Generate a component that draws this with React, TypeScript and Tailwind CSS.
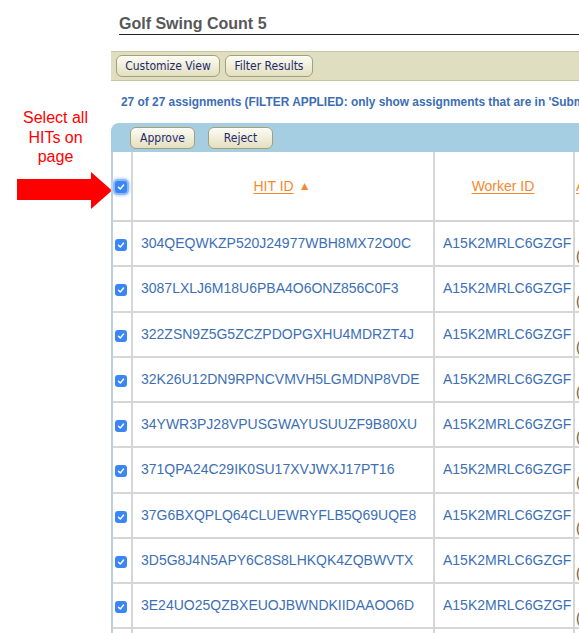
import React from 'react';

const hits = [
  '304QEQWKZP520J24977WBH8MX72O0C',
  '3087LXLJ6M18U6PBA4O6ONZ856C0F3',
  '322ZSN9Z5G5ZCZPDOPGXHU4MDRZT4J',
  '32K26U12DN9RPNCVMVH5LGMDNP8VDE',
  '34YWR3PJ28VPUSGWAYUSUUZF9B80XU',
  '371QPA24C29IK0SU17XVJWXJ17PT16',
  '37G6BXQPLQ64CLUEWRYFLB5Q69UQE8',
  '3D5G8J4N5APY6C8S8LHKQK4ZQBWVTX',
  '3E24UO25QZBXEUOJBWNDKIIDAAOO6D',
  '3F1567XTNW4KCXZ4ZU5HRSO8Q9KQ8I',
];

const Button: React.FC<{ label: string; className?: string }> = ({ label, className }) => (
  <button
    className={`h-[22px] rounded-[6px] border border-[#a59f76] bg-gradient-to-b from-[#fdfcf3] to-[#e3dfc0] font-['DejaVu_Sans_Condensed',sans-serif] text-[12px] text-[#1f2a6e] shadow-[inset_0_1px_0_#ffffff] ${className ?? ''}`}
  >
    {label}
  </button>
);

// macOS-style checked checkbox
const Check: React.FC<{ focused?: boolean }> = ({ focused }) => (
  <span
    className={`flex h-[12px] w-[12px] items-center justify-center rounded-[3px] bg-[#3a86f4] ${
      focused ? 'shadow-[0_0_0_2px_#8db9f6,0_0_3px_3px_#b9d4fa]' : ''
    }`}
  >
    <svg width="8" height="8" viewBox="0 0 8 8" fill="none">
      <path d="M1.5 4.2 L3.3 6 L6.6 2" stroke="#ffffff" strokeWidth="1.4" strokeLinecap="round" strokeLinejoin="round" />
    </svg>
  </span>
);

export default function App() {
  return (
    <div className="flex h-[633px] w-[579px] overflow-hidden bg-white font-['Liberation_Sans',Arial,sans-serif]">
      {/* Annotation */}
      <div className="w-[111px] shrink-0">
        <div className="mt-[108px] text-center text-[16px] leading-[19.5px] text-[#ff0000]">
          Select all
          <br />
          HITs on
          <br />
          page
        </div>
        <svg className="ml-[17px] mt-[5.5px] overflow-visible" width="95" height="37" viewBox="0 0 95 37">
          <rect x="0" y="7" width="75" height="21" fill="#ff0000" />
          <polygon points="74,0 95,18.5 74,37" fill="#ff0000" />
        </svg>
      </div>

      {/* Page content */}
      <div className="min-w-0 flex-1">
        <div className="ml-2 border-b-[1.5px] border-[#222] pt-[14px] text-[16px] font-bold leading-[20px] text-[#585858]">
          Golf Swing Count 5
        </div>

        <div className="mt-[16px] flex h-[30px] items-center gap-[5px] border-y border-[#c9c7a3] bg-[#dfdec0] pl-[5px]">
          <Button label="Customize View" className="w-[104px]" />
          <Button label="Filter Results" className="w-[88px]" />
        </div>

        <div className="mt-[14px] whitespace-nowrap pl-[10px] text-[11.9px] font-bold leading-[14px] text-[#3c6eb4]">
          27 of 27 assignments (FILTER APPLIED: only show assignments that are in 'Submitted' status)
        </div>

        <div className="mt-[14px] flex h-[29px] items-center gap-[13px] rounded-tl-[8px] bg-[#a5cee2] pl-[19px]">
          <Button label="Approve" className="w-[65px]" />
          <Button label="Reject" className="w-[65px]" />
        </div>

        {/* Table */}
        <div className="w-[640px] border-l-2 border-[#bccfdb] text-[14px]">
          <div className="flex h-[70px] border-b-2 border-[#d4d4d4]">
            <div className="flex w-[20px] shrink-0 items-center justify-center border-r-2 border-[#d6d6d6] pr-[2px] pt-[2px]">
              <Check focused />
            </div>
            <div className="flex w-[302px] shrink-0 items-center justify-center border-r-2 border-[#d6d6d6] pr-[2px] text-[#f7882f]">
              <span className="underline underline-offset-2">HIT ID</span>
              <span className="ml-[5px] text-[12px]">▲</span>
            </div>
            <div className="flex w-[140px] shrink-0 items-center justify-center border-r-2 border-[#d6d6d6] pr-[2px] text-[#f7882f]">
              <span className="underline underline-offset-2">Worker ID</span>
            </div>
            <div className="flex items-center pl-[1px] text-[#f7882f]">
              <span className="underline underline-offset-2">Accept Time</span>
            </div>
          </div>

          {hits.map((id) => (
            <div key={id} className="flex h-[45.25px] border-b-2 border-[#d6d6d6]">
              <div className="flex w-[20px] shrink-0 items-center justify-center border-r-2 border-[#d6d6d6] pr-[2px] pt-[3px]">
                <Check />
              </div>
              <div className="flex w-[302px] shrink-0 items-center border-r-2 border-[#d6d6d6] pl-[8px] text-[#3d6fb5]">
                {id}
              </div>
              <div className="flex w-[140px] shrink-0 items-center border-r-2 border-[#d6d6d6] pl-[8px] text-[#3d6fb5]">
                A15K2MRLC6GZGF
              </div>
              <div className="flex items-center pl-[1px] pt-[26px] text-[#6e5a36]">(Submitted)</div>
            </div>
          ))}
        </div>
      </div>
    </div>
  );
}
